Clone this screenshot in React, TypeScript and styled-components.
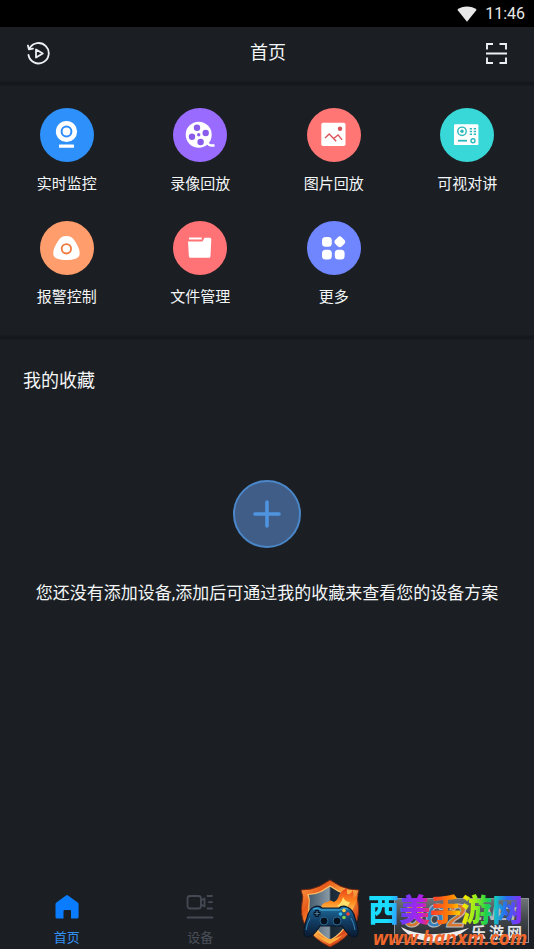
import React from "react";
import styled, { createGlobalStyle } from "styled-components";

const GlobalStyle = createGlobalStyle`
  * { box-sizing: border-box; }
  body {
    margin: 0;
    background: #1b1f23;
    color: #f4f6f8;
    font-family: Roboto, "Noto Sans CJK SC", sans-serif;
  }
  button { font: inherit; color: inherit; background: none; border: 0; padding: 0; cursor: pointer; }
  a { text-decoration: none; }
  svg { display: block; }
`;

const Screen = styled.div`
  position: relative;
  min-height: 100vh;
  display: flex;
  flex-direction: column;
  overflow: hidden;
`;

const StatusBar = styled.div`
  height: 27px;
  padding: 0 9px;
  display: flex;
  align-items: center;
  justify-content: flex-end;
  gap: 8px;
  background: #000;
  color: #e8e8e8;
  font-size: 16px;
  font-weight: 400;
`;

const Header = styled.header`
  height: 54px;
  padding: 0 27px 2px;
  display: flex;
  align-items: center;
  justify-content: space-between;
`;

const Title = styled.h1`
  margin: 0;
  font-size: 18px;
  font-weight: 400;
  line-height: 22px;
`;

const Divider = styled.div`
  height: 5px;
  background: linear-gradient(#181c20, #14181c 50%, #181c20);
`;

const Shortcuts = styled.nav`
  display: grid;
  grid-template-columns: repeat(4, 1fr);
  row-gap: 26px;
  padding: 22px 0 27px;
`;

const Shortcut = styled.button`
  display: flex;
  flex-direction: column;
  align-items: center;
  gap: 11px;
  font-size: 15px;
  line-height: 22px;
`;

const Disc = styled.span<{ $color: string }>`
  width: 54px;
  height: 54px;
  border-radius: 50%;
  background: ${(p) => p.$color};
`;

const Favorites = styled.main`
  flex: 1;
  display: flex;
  flex-direction: column;
  padding: 28px 23px 0;
`;

const SectionTitle = styled.h2`
  margin: 0;
  font-size: 18px;
  font-weight: 400;
  line-height: 26px;
`;

const Empty = styled.div`
  display: flex;
  flex-direction: column;
  align-items: center;
  gap: 33px;
  padding-top: 86px;
  margin: 0 -12px;
`;

const AddButton = styled.button`
  width: 68px;
  height: 68px;
  border: 2px solid #4a86c8;
  border-radius: 50%;
  background: #3f5d86;
  display: grid;
  place-items: center;
`;

const Hint = styled.p`
  margin: 0;
  font-size: 17px;
  line-height: 24px;
  text-align: center;
`;

const TabBar = styled.nav`
  display: grid;
  grid-template-columns: repeat(4, 1fr);
  padding-bottom: 1px;
`;

const Tab = styled.a<{ $active?: boolean }>`
  display: flex;
  flex-direction: column;
  align-items: center;
  gap: 8px;
  font-size: 13px;
  line-height: 20px;
  color: ${(p) => (p.$active ? "#3391f5" : "#4b505a")};
`;

const Watermark = styled.div`
  position: absolute;
  right: 4px;
  bottom: 0;
  display: flex;
  align-items: flex-end;
  gap: 8px;
`;

const Brand = styled.div`
  position: relative;
  width: 162px;
  height: 60px;
`;

const Plate = styled.div`
  position: absolute;
  right: 1px;
  bottom: 6px;
`;

const BrandName = styled.div`
  position: relative;
  width: max-content;
  font-family: "Noto Sans CJK SC", sans-serif;
  font-size: 31px;
  font-weight: 900;
  line-height: 38px;
  white-space: nowrap;
  color: transparent;
  background: linear-gradient(
    95deg,
    #19dcff 0 14%,
    #2aa8ff 19%,
    #6a3cf5 23%,
    #b51fe8 35%,
    #ff3a2e 41%,
    #ff8a00 54%,
    #ffe600 61%,
    #8ef01c 69%,
    #1fd14a 76%,
    #12c8c0 81%,
    #2a6cf0 88%,
    #8a2cf5 98%
  );
  background-clip: text;
  -webkit-background-clip: text;
`;

const BrandUrl = styled.div`
  position: relative;
  padding-left: 5px;
  font-family: "Noto Sans", sans-serif;
  font-size: 19px;
  font-weight: 700;
  font-style: italic;
  line-height: 22px;
  white-space: nowrap;
  color: #f0662a;
`;

const HistoryIcon = () => (
  <svg width="23" height="23" viewBox="0 0 23 23" fill="none" stroke="#eef1f4" strokeWidth="1.8" strokeLinecap="round" strokeLinejoin="round">
    <path d="M2.6 6.3A10.2 10.2 0 1 1 1.5 13" />
    <path d="M0.9 3.5 2 7.4 6 6.7" />
    <path d="M9 7.5v8l6.8-4z" />
  </svg>
);

const ScanIcon = () => (
  <svg width="21" height="21" viewBox="0 0 21 21" fill="none" stroke="#eef1f4" strokeWidth="1.9">
    <path d="M1 6.5V1h6M13.500 1H20v5.500M1 14.500V20h6M13.500 20H20v-5.500M0 10.500h21" />
  </svg>
);

const art = {
  monitor: (
    <>
      <circle cx="26.500" cy="23.500" r="10.600" />
      <circle cx="26.500" cy="23.500" r="4.900" fill="none" stroke="#2d8dfb" strokeWidth="2" />
      <rect x="19" y="36.500" width="15" height="3.300" rx="0.600" />
    </>
  ),
  reel: (
    <>
      <circle cx="25.700" cy="26.700" r="13" />
      <path d="M32 35q3 0 4.500 2 1.500 1 5 .2" fill="none" stroke="#fff" strokeWidth="2.600" />
      <g fill="#8a5cec">
        <circle cx="24" cy="19.700" r="3.200" />
        <circle cx="32.700" cy="25" r="3.200" />
        <circle cx="27.600" cy="34" r="3.200" />
        <circle cx="19" cy="28.700" r="3.200" />
        <circle cx="25.700" cy="26.700" r="1.700" />
      </g>
    </>
  ),
  picture: (
    <>
      <rect x="14.300" y="14.800" width="24.200" height="23.200" rx="1.800" />
      <circle cx="33" cy="20.700" r="2.200" fill="#d9535a" />
      <path d="M18 30l4.200-4 7 7.300M26.300 30.800l4.800-3.900 4 5" fill="none" stroke="#d9535a" strokeWidth="1.400" />
    </>
  ),
  intercom: (
    <>
      <rect x="14" y="16.300" width="24.400" height="20.800" rx="1.200" />
      <g fill="none" stroke="#2bb9bc" strokeWidth="1.400">
        <circle cx="22" cy="23.300" r="4.200" />
        <circle cx="33" cy="32.700" r="2" />
        <path d="M18 32.700h9" strokeWidth="1.800" />
        <path d="M29.700 20.700h2.300M33.700 20.700h2.300M29.700 23.500h2.300M33.700 23.500h2.300M29.700 26.300h2.300M33.700 26.300h2.300" />
      </g>
      <circle cx="22" cy="23.300" r="1.700" fill="#2bb9bc" />
    </>
  ),
  alarm: (
    <>
      <path d="M26.400 15c4 0 6.600 1.800 8.600 5.200 2.200 3.800 4.700 7.700 4.700 12 0 5.500-6 6.800-13.300 6.800s-13.200-1.300-13.200-6.800c0-4.300 2.500-8.200 4.700-12 2-3.400 4.500-5.200 8.500-5.200z" />
      <circle cx="26.400" cy="27.800" r="4.700" fill="none" stroke="#f0783c" strokeWidth="1.800" />
    </>
  ),
  folder: (
    <>
      <path d="M15 20.500h14.500l2-3.800h5.300q1.500 0 1.500 1.500l-.8 17q-.1 1.600-1.700 1.600H17.500q-1.500 0-1.600-1.600z" />
      <path d="M16 17.500h12.700" fill="none" stroke="#fff" strokeWidth="2" />
    </>
  ),
  more: (
    <>
      <rect x="15" y="16" width="9.800" height="9.800" rx="3.500" />
      <rect x="28.200" y="16.200" width="9.200" height="9.200" rx="3" transform="rotate(45 32.800 20.800)" />
      <rect x="15" y="28.700" width="9.800" height="9.800" rx="3.500" />
      <rect x="27.800" y="28.700" width="9.800" height="9.800" rx="3.500" />
    </>
  ),
};

const shortcuts: { label: string; color: string; icon: keyof typeof art }[] = [
  { label: "实时监控", color: "#2e90fa", icon: "monitor" },
  { label: "录像回放", color: "#9a6bff", icon: "reel" },
  { label: "图片回放", color: "#ff7675", icon: "picture" },
  { label: "可视对讲", color: "#38d8d8", icon: "intercom" },
  { label: "报警控制", color: "#ff9d6c", icon: "alarm" },
  { label: "文件管理", color: "#ff7275", icon: "folder" },
  { label: "更多", color: "#6f86ff", icon: "more" },
];

const ShieldLogo = () => (
  <svg width="60" height="70" viewBox="0 0 60 70">
    <defs>
      <linearGradient id="rim" x1="0" y1="0" x2="1" y2="1">
        <stop offset="0" stopColor="#ffa94c" />
        <stop offset=".25" stopColor="#e85a1a" />
        <stop offset=".5" stopColor="#ffb347" />
        <stop offset=".75" stopColor="#d9481a" />
        <stop offset="1" stopColor="#ffb04a" />
      </linearGradient>
      <linearGradient id="steel" x1="0" y1="0" x2="1" y2="0">
        <stop offset="0" stopColor="#42586a" />
        <stop offset=".48" stopColor="#8998a5" />
        <stop offset=".52" stopColor="#1a2835" />
        <stop offset="1" stopColor="#263c4d" />
      </linearGradient>
      <linearGradient id="pad" x1="0" y1="0" x2="0" y2="1">
        <stop offset="0" stopColor="#1f6fa0" />
        <stop offset=".5" stopColor="#123c63" />
        <stop offset="1" stopColor="#0a1a30" />
      </linearGradient>
      <linearGradient id="flame" x1="0" y1="1" x2="0" y2="0">
        <stop offset="0" stopColor="#ffe27a" />
        <stop offset=".5" stopColor="#ff8a1e" />
        <stop offset="1" stopColor="#e8401a" />
      </linearGradient>
    </defs>
    <path d="M30 1 40 7q8 4 19 4-3 7-1 13 2 12-3 22-8 14-25 22Q13 60 5 46 0 36 2 24q2-6-1-13 11 0 19-4z" fill="url(#rim)" stroke="#7d2a12" />
    <path d="M30 7 39 12.500q6 3 13 3-2 6-1 10 1 10-3 18-6 11-18 18-12-7-18-18-4-8-3-18 1-5-1-10 7 0 13-3z" fill="url(#steel)" stroke="#ffc56b" strokeWidth="1.200" />
    <path d="M21 28q2-5 7-5 2-3 6 0 4-2 5-7 2-4 8-7-1 4 1 7 4-2 5-5 1 5 0 8 3-1 5-4-1 8-5 15-3 7-8 7-16-2-24-9z" fill="url(#flame)" />
    <path d="M37 27q5-3 6-9 2 5 7 5-3 4-3 8z" fill="#ffe06a" />
    <path d="M14 28q5-2 8 1h17q3-3 8-1 6 2 8 11 3 9 3 14 0 5-4 5-5 0-12-11H20Q13 58 8 58q-4 0-4-5 0-6 3-14 2-9 7-11z" fill="url(#pad)" stroke="#0b1727" strokeWidth="1.200" />
    <path d="M13 30q5-2 8 1h19q4-3 8-1" fill="none" stroke="#48b4df" strokeWidth="1" />
    <path d="M6 51q1-7 4-12M55 51q-1-7-4-12" fill="none" stroke="#3d9bd0" strokeWidth=".8" />
    <path d="M17 31v7M13.500 34.500h7" stroke="#071424" strokeWidth="3.600" />
    <path d="M17 32v5M14.500 34.500h5" stroke="#4d7c9b" strokeWidth="1.100" />
    <circle cx="24" cy="42" r="4" fill="#07121f" stroke="#2b668f" />
    <circle cx="37" cy="42" r="4" fill="#07121f" stroke="#2b668f" />
    <circle cx="44" cy="31.500" r="1.800" fill="#ffd13f" />
    <circle cx="48" cy="35" r="1.800" fill="#ff4436" />
    <circle cx="40.500" cy="35" r="1.800" fill="#35bfe8" />
    <circle cx="44" cy="38.500" r="1.800" fill="#7bd34a" />
    <path d="M17 56q7 7 13 9 7-3 13-9-8 4-13 4t-13-4z" fill="#ffab3d" />
  </svg>
);

const SitePlate = () => (
  <svg width="135" height="45" viewBox="0 0 135 45">
    <defs>
      <linearGradient id="plate" x1="0" y1="0" x2="0" y2="1">
        <stop offset="0" stopColor="#70757a" />
        <stop offset=".5" stopColor="#3e4347" />
        <stop offset="1" stopColor="#25292d" />
      </linearGradient>
    </defs>
    <rect x=".5" y=".5" width="134" height="44" fill="url(#plate)" stroke="#8f9397" />
    <g fontFamily="Liberation Sans, sans-serif" fontWeight="700" fontStyle="italic" fontSize="34" stroke="#b9bdc0" strokeWidth="1">
      <text x="10" y="29" fill="#d8752c">9</text>
      <text x="31" y="29" fill="#347fbe">6</text>
      <text x="53" y="29" fill="#d8752c">2</text>
    </g>
    <path d="M7 29q25 14 68 1-25 20-51 11Q11 36 7 29z" fill="#eceeef" />
    <text x="84" y="22" fill="#b4b8bb" fontFamily="Liberation Sans, sans-serif" fontWeight="700" fontStyle="italic" fontSize="18">.NET</text>
    <text y="40" fill="#e4e6e8" fontFamily="Noto Sans CJK SC, sans-serif" fontWeight="700" fontSize="15">
      <tspan x="77">乐</tspan>
      <tspan x="95">游</tspan>
      <tspan x="113">网</tspan>
    </text>
  </svg>
);

export default function App() {
  return (
    <Screen>
      <GlobalStyle />
      <StatusBar>
        <svg width="20" height="16" viewBox="0 0 20 16" fill="#e8e8e8">
          <path d="M.3 3.800Q4.500.5 10 .5t9.700 3.300L10 15.800z" />
        </svg>
        <span>11:46</span>
      </StatusBar>
      <Header>
        <button aria-label="回放记录"><HistoryIcon /></button>
        <Title>首页</Title>
        <button aria-label="扫一扫"><ScanIcon /></button>
      </Header>
      <Divider />
      <Shortcuts>
        {shortcuts.map((s) => (
          <Shortcut key={s.label}>
            <Disc $color={s.color}>
              <svg width="54" height="54" viewBox="0 0 54 54" fill="#fff">{art[s.icon]}</svg>
            </Disc>
            {s.label}
          </Shortcut>
        ))}
      </Shortcuts>
      <Divider />
      <Favorites>
        <SectionTitle>我的收藏</SectionTitle>
        <Empty>
          <AddButton aria-label="添加设备">
            <svg width="28" height="28" viewBox="0 0 28 28" stroke="#4f94e0" strokeWidth="3.600" strokeLinecap="round">
              <path d="M14 2v24M2 14h24" />
            </svg>
          </AddButton>
          <Hint>您还没有添加设备,添加后可通过我的收藏来查看您的设备方案</Hint>
        </Empty>
      </Favorites>
      <TabBar>
        <Tab href="#home" $active>
          <svg width="26" height="26" viewBox="0 0 26 26" fill="#0a7cff">
            <path d="M12 1.500q1-.8 2 0l9.700 7q.9.700.9 1.800V23q0 1.500-1.500 1.500H17V17q0-1-1-1h-5.500q-1 0-1 1v7.500H3Q1.500 24.500 1.500 23V10.300q0-1.100.9-1.800z" />
          </svg>
          首页
        </Tab>
        <Tab href="#devices">
          <svg width="28" height="26" viewBox="0 0 28 26" fill="none" stroke="#444954" strokeWidth="1.800" strokeLinecap="round" strokeLinejoin="round">
            <rect x="1.500" y="2" width="13.500" height="12.500" rx="2.500" />
            <path d="M15 6.500l3.500-2v8l-3.500-2M21.500 2H26M23 8.200h3M21.500 14.500H26M1.500 23.500H26.500" />
          </svg>
          设备
        </Tab>
      </TabBar>
      <Watermark>
        <ShieldLogo />
        <Brand>
          <Plate><SitePlate /></Plate>
          <BrandName>西美手游网</BrandName>
          <BrandUrl>www.hanxm.com</BrandUrl>
        </Brand>
      </Watermark>
    </Screen>
  );
}
